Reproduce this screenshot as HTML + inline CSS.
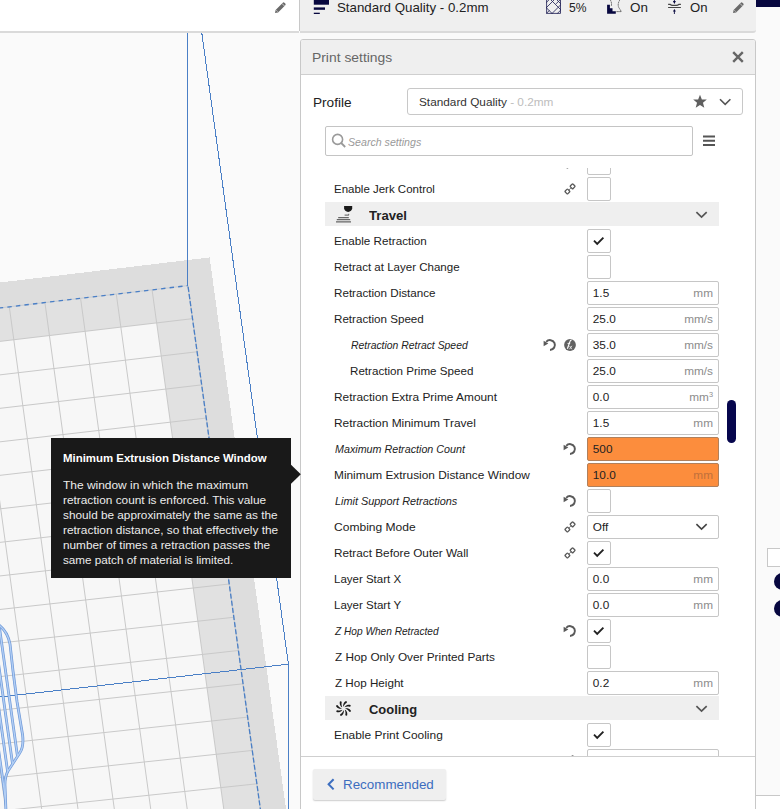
<!DOCTYPE html>
<html><head><meta charset="utf-8"><style>
*{margin:0;padding:0;box-sizing:border-box}
html,body{width:780px;height:809px;overflow:hidden;background:#fafafa;font-family:"Liberation Sans",sans-serif}
.t{position:absolute;white-space:nowrap;line-height:1}
.t sup{font-size:0.62em;vertical-align:0;position:relative;top:-0.5em}
.ic{position:absolute;overflow:visible}
.abs{position:absolute}
.cb{position:absolute;width:24px;height:24px;border:1px solid #c6c6c6;border-radius:2px;background:#fff}
.inp{position:absolute;left:587px;width:132px;height:24px;border:1px solid #c6c6c6;border-radius:2px;background:#fff}
.inp.err{background:#fc8d3d;border-color:#b0805c}
.cat{position:absolute;left:325px;width:394px;height:24px;background:#efefef}
</style></head><body>
<svg class="abs" style="left:0;top:0" width="300" height="809" viewBox="0 0 300 809">
<polygon shape-rendering="crispEdges" points="-171.08,302.95 209.60,257.46 296.05,881.35 -87.54,921.04" fill="#dddddd"/>
<polygon shape-rendering="crispEdges" points="-167.71,327.85 187.94,285.59 270.73,883.97 -87.54,921.04" fill="#e1e1e1"/>
<polygon shape-rendering="crispEdges" points="-163.28,360.65 156.65,322.90 234.61,887.71 -87.54,921.04" fill="#f7f7f7"/>
<path d="M-167.71 327.85L-87.54 921.04M-132.43 323.66L-52.01 917.36M-97.09 319.46L-16.41 913.68M-61.69 315.26L19.25 909.99M-26.22 311.04L54.98 906.29M9.31 306.82L90.78 902.59M44.91 302.59L126.64 898.88M80.57 298.35L162.56 895.16M116.30 294.11L198.55 891.44M152.09 289.85L234.61 887.71M187.94 285.59L270.73 883.97M-163.28 360.65L192.52 318.67M-158.84 393.46L197.10 351.77M-154.41 426.29L201.68 384.88M-149.97 459.14L206.26 418.02M-145.53 492.01L210.85 451.17M-141.08 524.89L215.44 484.35M-136.63 557.80L220.03 517.54M-132.19 590.73L224.63 550.76M-127.73 623.67L229.23 583.99M-123.28 656.63L233.83 617.24M-118.82 689.62L238.43 650.51M-114.36 722.62L243.04 683.81M-109.90 755.64L247.64 717.12M-105.43 788.68L252.26 750.45M-100.96 821.74L256.87 783.80M-96.49 854.82L261.49 817.17M-92.02 887.92L266.11 850.56" stroke="#c9c9c9" stroke-width="1" fill="none"/>
<polyline points="-167.71,327.85 187.94,285.59 270.73,883.97" stroke="#c6ccd4" stroke-width="1" fill="none"/>
<polyline points="-167.71,327.85 187.94,285.59" stroke="#4a7fc6" stroke-width="1.3" fill="none" stroke-dasharray="4.4 4.2" stroke-dashoffset="4.3"/>
<polyline points="187.94,285.59 270.73,883.97" stroke="#4a7fc6" stroke-width="1.3" fill="none" stroke-dasharray="5.1 2.1" stroke-dashoffset="5.9"/>
<path d="M187.4 30L187.4 285.6M201.4 30L288.4 664.2L0 697M288.4 664.2L288.4 812" stroke="#4a7fc6" stroke-width="1" fill="none" shape-rendering="crispEdges"/>
<clipPath id="mc"><path d="M-1 625C4 629 8.5 636 10 644L13 671L17 701.5L22.6 735Q24 747 19.7 753L8 771Q4.6 777 5 786L6 812L-2 812Z"/></clipPath>
<path clip-path="url(#mc)" d="M-1.6 620L26.4 820M-7.6 620L20.4 820M-13.6 620L14.4 820M-19.6 620L8.4 820" stroke="#6d98d8" stroke-width="2.8" fill="none"/>
<path d="M-1 625C4 629 8.5 636 10 644L13 671L17 701.5L22.6 735Q24 747 19.7 753L8 771Q4.6 777 5 786L6 812" stroke="#6d98d8" stroke-width="2.8" fill="none"/>
<path clip-path="url(#mc)" d="M-1.6 620L26.4 820M-7.6 620L20.4 820M-13.6 620L14.4 820M-19.6 620L8.4 820" stroke="#b3cff5" stroke-width="1.4" fill="none"/>
<path d="M-1 625C4 629 8.5 636 10 644L13 671L17 701.5L22.6 735Q24 747 19.7 753L8 771Q4.6 777 5 786L6 812" stroke="#b3cff5" stroke-width="1.4" fill="none"/>
</svg>
<!-- top bar -->
<div class="abs" style="left:0;top:0;width:299px;height:33px;background:#fff;border-bottom:2px solid #dadada"></div>
<div class="abs" style="left:299px;top:0;width:1px;height:31px;background:#c8c8c8"></div>
<div class="abs" style="left:300px;top:0;width:456px;height:33px;background:#efefef;border-bottom:2px solid #dadada;border-bottom-right-radius:3px"></div>
<div class="abs" style="left:756px;top:0;width:24px;height:6.5px;background:#07073f"></div>
<svg class="ic" style="left:274px;top:1px" width="13" height="13" viewBox="0 0 13 13"><path d="M1.6 8.9L8.8 1.7Q9.6 0.9 10.4 1.7L11.3 2.6Q12.1 3.4 11.3 4.2L4.1 11.4L1 12Z" fill="#6a6a6a"/><path d="M8 2.5L10.5 5" stroke="#fff" stroke-width="0.7"/><path d="M2.3 9.2L3.8 10.7" stroke="#fff" stroke-width="0.6"/></svg>
<svg class="ic" style="left:313px;top:-1px" width="17" height="16" viewBox="0 0 17 16"><rect x="0.8" y="0" width="15.2" height="5.7" fill="#07073f"/><rect x="0.8" y="8.4" width="11.2" height="2.4" fill="#07073f"/><rect x="0.8" y="13.7" width="6" height="1.3" fill="#07073f"/></svg>
<div class="t" style="left:337.0px;top:0.83px;font-size:13.2px;color:#222;transform:scaleX(1.0089);transform-origin:0 0;">Standard Quality - 0.2mm</div>

<svg class="abs" style="left:0;top:0" width="780" height="20" viewBox="0 0 780 20">
<defs><clipPath id="ic1"><rect x="546.1" y="-3" width="14.8" height="16.8"/></clipPath></defs>
<g fill="none" stroke="#26265a" stroke-width="0.85">
<path d="M546.6 -3V13.4H560.5V-3"/>
<g clip-path="url(#ic1)"><path d="M540 14.0L560 -6.0M545 -6.0L565 14.0M540 1.3999999999999773L556 17.399999999999977M548 17.5L566 -0.5M556 3.8999999999999773L562 -2.1000000000000227M557 0.0L562 5.0M556 14.799999999999955L562 8.799999999999955M545 3.7999999999999545L550 -1.2000000000000455M545 14.799999999999955L549.5 10.299999999999955"/></g>
</g>
<path d="M607.1 4.8H609.9V8.2H612.5V11.3H615.8V13.8H607.1Z" fill="#07073f"/>
<path d="M610.3 0Q612.2 3 611.2 6.4M619.8 0Q617.4 3.6 618.6 7.2L621.4 11.6H615.8" fill="none" stroke="#555" stroke-width="0.9" stroke-dasharray="1.6 0.6"/>
<path d="M668.1 4.4H670.2Q671 5.4 672.5 5.4H676.5Q678 5.4 678.8 4.4H680.9M668.1 7.5H680.9" fill="none" stroke="#444" stroke-width="1.1"/>
<path d="M674.4 -1V2M674.4 11V14" stroke="#0a0a40" stroke-width="0.9"/>
<path d="M672.9 1.1H675.9L674.4 3.9ZM672.9 11.6H675.9L674.4 8.9Z" fill="#0a0a40"/>
</svg>
<div class="t" style="left:569.0px;top:0.83px;font-size:13.2px;color:#222;transform:scaleX(0.9180);transform-origin:0 0;">5%</div>

<div class="t" style="left:630.0px;top:0.83px;font-size:13.2px;color:#222;transform:scaleX(1.0174);transform-origin:0 0;">On</div>

<div class="t" style="left:690.0px;top:0.83px;font-size:13.2px;color:#222;transform:scaleX(0.9947);transform-origin:0 0;">On</div>
<svg class="ic" style="left:732px;top:1px" width="13" height="13" viewBox="0 0 13 13"><path d="M1.6 8.9L8.8 1.7Q9.6 0.9 10.4 1.7L11.3 2.6Q12.1 3.4 11.3 4.2L4.1 11.4L1 12Z" fill="#6a6a6a"/><path d="M8 2.5L10.5 5" stroke="#efefef" stroke-width="0.7"/><path d="M2.3 9.2L3.8 10.7" stroke="#efefef" stroke-width="0.6"/></svg>

<!-- panel -->
<div class="abs" style="left:300px;top:39px;width:456px;height:790px;background:#fff;border:1px solid #c8c8c8;border-radius:3px"></div>
<div class="abs" style="left:301px;top:40px;width:454px;height:35px;background:#efefef;border-bottom:1px solid #cfcfcf;border-radius:2px 2px 0 0"></div>
<div class="t" style="left:312.0px;top:50.97px;font-size:13.5px;color:#666;transform:scaleX(1.0276);transform-origin:0 0;">Print settings</div>
<svg class="ic" style="left:732px;top:51px" width="12" height="12" viewBox="0 0 12 12"><path d="M1.2 1.2L10.8 10.8M10.8 1.2L1.2 10.8" stroke="#666" stroke-width="2.4"/></svg>
<div class="t" style="left:312.8px;top:95.94px;font-size:13.3px;color:#222;transform:scaleX(1.0238);transform-origin:0 0;">Profile</div>
<div class="abs" style="left:407px;top:88px;width:336px;height:27px;border:1px solid #c8c8c8;border-radius:3px;background:#fff"></div>
<div class="t" style="left:419px;top:97.01px;font-size:11.8px;color:#333;">Standard Quality<span style="color:#bdbdbd"> - 0.2mm</span></div>
<svg class="ic" style="left:693px;top:95px" width="14" height="13" viewBox="0 0 14 13"><path transform="translate(7 6.6) scale(1.1) translate(-7 -6.6)" d="M7 0.4L8.7 4.6L13.2 4.8L9.7 7.7L10.9 12.2L7 9.7L3.1 12.2L4.3 7.7L0.8 4.8L5.3 4.6Z" fill="#5f5f5f"/></svg>
<svg class="ic" style="left:719px;top:98px" width="13" height="8" viewBox="0 0 13 8"><path d="M1 1.2L6.2 6.3L11.4 1.2" fill="none" stroke="#555" stroke-width="1.6"/></svg>
<div class="abs" style="left:325px;top:126px;width:368px;height:30px;border:1px solid #c4c4c4;border-radius:2px;background:#fff"></div>
<svg class="ic" style="left:331px;top:133px" width="16" height="16" viewBox="0 0 16 16"><circle cx="6.6" cy="6.4" r="5" fill="none" stroke="#9a9a9a" stroke-width="1.6"/><path d="M10.2 10L14.2 14" stroke="#9a9a9a" stroke-width="1.8"/></svg>
<div class="t" style="left:348.0px;top:137.23px;font-size:10.6px;color:#9a9a9a;font-style:italic;transform:scaleX(1.0023);transform-origin:0 0;">Search settings</div>
<svg class="ic" style="left:703px;top:135px" width="13" height="12" viewBox="0 0 13 12"><path d="M0 1.5H12M0 5.7H12M0 10H12" stroke="#555" stroke-width="1.9"/></svg>

<!-- settings list -->
<div class="abs" style="left:301px;top:168px;width:454px;height:588px;overflow:hidden">
<div class="abs" style="left:-301px;top:-168px;width:780px;height:809px">
<div class="cb" style="left:587px;top:151px"></div>
<svg class="ic" style="left:563px;top:156px" width="14" height="14" viewBox="0 0 14 14"><g fill="none" stroke="#5a5a5a" stroke-width="1.35"><rect x="2.5" y="7.6" width="3.8" height="3.8" rx="0.8" transform="rotate(45 4.4 9.5)"/><rect x="7.7" y="2.4" width="3.8" height="3.8" rx="0.8" transform="rotate(45 9.6 4.3)"/><path d="M6.2 7.7L7.8 6.1" stroke-width="1"/></g></svg>
<div class="t" style="left:333.7px;top:183.51px;font-size:11.8px;color:#222;transform:scaleX(0.9739);transform-origin:0 0;">Enable Jerk Control</div>
<svg class="ic" style="left:563px;top:182px" width="14" height="14" viewBox="0 0 14 14"><g fill="none" stroke="#5a5a5a" stroke-width="1.35"><rect x="2.5" y="7.6" width="3.8" height="3.8" rx="0.8" transform="rotate(45 4.4 9.5)"/><rect x="7.7" y="2.4" width="3.8" height="3.8" rx="0.8" transform="rotate(45 9.6 4.3)"/><path d="M6.2 7.7L7.8 6.1" stroke-width="1"/></g></svg>
<div class="cb" style="left:587px;top:177px"></div>
<div class="cat" style="top:202px"></div>
<svg class="ic" style="left:335px;top:205px" width="18" height="18" viewBox="0 0 18 18"><path d="M9.1 1.1H17.2V3.2C17.2 5.2 15.3 6.3 13.15 7C11 6.3 9.1 5.2 9.1 3.2Z" fill="#1b1b1b"/><path d="M9.6 10.2H13.4L13.8 8.8" stroke="#777" stroke-width="1.2" fill="none"/><path d="M3.2 12.6H13.8M1.8 14.6H15.2M1 16.9H16" stroke="#666" stroke-width="1.3" fill="none"/></svg>
<div class="t" style="left:368.5px;top:209.85px;font-size:12.7px;color:#222;font-weight:700;transform:scaleX(1.0358);transform-origin:0 0;">Travel</div>
<svg class="ic" style="left:694.5px;top:211.3px" width="13" height="8" viewBox="0 0 13 8"><path d="M1.4 1.1L6.55 6.1L11.7 1.1" fill="none" stroke="#555" stroke-width="1.7"/></svg>
<div class="t" style="left:333.7px;top:235.51px;font-size:11.8px;color:#222;transform:scaleX(0.9895);transform-origin:0 0;">Enable Retraction</div>
<div class="cb" style="left:587px;top:229px"></div>
<svg class="ic" style="left:592.8px;top:235.8px" width="12" height="10" viewBox="0 0 12 10"><path d="M1 4.6L4.2 7.8L10.4 1.6" fill="none" stroke="#222" stroke-width="1.9"/></svg>
<div class="t" style="left:333.7px;top:261.51px;font-size:11.8px;color:#222;transform:scaleX(0.9772);transform-origin:0 0;">Retract at Layer Change</div>
<div class="cb" style="left:587px;top:255px"></div>
<div class="t" style="left:333.7px;top:287.51px;font-size:11.8px;color:#222;transform:scaleX(0.9869);transform-origin:0 0;">Retraction Distance</div>
<div class="inp" style="top:281px"></div>
<div class="t" style="left:592.8px;top:288.01px;font-size:11.8px;color:#222;">1.5</div>
<div class="t" style="right:67px;top:288.01px;font-size:11.8px;color:#8c8c8c;">mm</div>
<div class="t" style="left:333.7px;top:313.51px;font-size:11.8px;color:#222;transform:scaleX(0.9851);transform-origin:0 0;">Retraction Speed</div>
<div class="inp" style="top:307px"></div>
<div class="t" style="left:592.8px;top:314.01px;font-size:11.8px;color:#222;">25.0</div>
<div class="t" style="right:67px;top:314.01px;font-size:11.8px;color:#8c8c8c;">mm/s</div>
<div class="t" style="left:351.2px;top:339.51px;font-size:11.8px;color:#222;font-style:italic;transform:scaleX(0.8810);transform-origin:0 0;">Retraction Retract Speed</div>
<svg class="ic" style="left:542.5px;top:337.8px" width="14" height="14" viewBox="0 0 14 14"><path d="M3.25 3.85A4.9 4.9 0 1 1 7 11.90" fill="none" stroke="#5a5a5a" stroke-width="2"/><path d="M0.6 2.8L0.6 8.3L5.3 5.5Z" fill="#5a5a5a"/></svg>
<svg class="ic" style="left:563px;top:337.8px" width="14" height="14" viewBox="0 0 14 14"><circle cx="7" cy="7" r="5.9" fill="#626262"/><path d="M8.6 2.2Q7.4 2.1 7 3.4L4.4 10.8" fill="none" stroke="#fff" stroke-width="1.2"/><path d="M4.5 5.4H7.2" stroke="#fff" stroke-width="0.9"/><path d="M6.6 8L8.8 11.2M8.9 7.8L6.5 11.2" stroke="#e8e8e8" stroke-width="0.9"/></svg>
<div class="inp" style="top:333px"></div>
<div class="t" style="left:592.8px;top:340.01px;font-size:11.8px;color:#222;">35.0</div>
<div class="t" style="right:67px;top:340.01px;font-size:11.8px;color:#8c8c8c;">mm/s</div>
<div class="t" style="left:350.2px;top:365.51px;font-size:11.8px;color:#222;transform:scaleX(0.9852);transform-origin:0 0;">Retraction Prime Speed</div>
<div class="inp" style="top:359px"></div>
<div class="t" style="left:592.8px;top:366.01px;font-size:11.8px;color:#222;">25.0</div>
<div class="t" style="right:67px;top:366.01px;font-size:11.8px;color:#8c8c8c;">mm/s</div>
<div class="t" style="left:333.7px;top:391.51px;font-size:11.8px;color:#222;transform:scaleX(1.0065);transform-origin:0 0;">Retraction Extra Prime Amount</div>
<div class="inp" style="top:385px"></div>
<div class="t" style="left:592.8px;top:392.01px;font-size:11.8px;color:#222;">0.0</div>
<div class="t" style="right:67px;top:392.01px;font-size:11.8px;color:#8c8c8c;">mm<sup>3</sup></div>
<div class="t" style="left:333.7px;top:417.51px;font-size:11.8px;color:#222;transform:scaleX(1.0107);transform-origin:0 0;">Retraction Minimum Travel</div>
<div class="inp" style="top:411px"></div>
<div class="t" style="left:592.8px;top:418.01px;font-size:11.8px;color:#222;">1.5</div>
<div class="t" style="right:67px;top:418.01px;font-size:11.8px;color:#8c8c8c;">mm</div>
<div class="t" style="left:334.7px;top:443.51px;font-size:11.8px;color:#222;font-style:italic;transform:scaleX(0.9088);transform-origin:0 0;">Maximum Retraction Count</div>
<svg class="ic" style="left:563.3px;top:441.7px" width="14" height="14" viewBox="0 0 14 14"><path d="M3.25 3.85A4.9 4.9 0 1 1 7 11.90" fill="none" stroke="#5a5a5a" stroke-width="2"/><path d="M0.6 2.8L0.6 8.3L5.3 5.5Z" fill="#5a5a5a"/></svg>
<div class="inp err" style="top:437px"></div>
<div class="t" style="left:592.8px;top:444.01px;font-size:11.8px;color:#222;">500</div>
<div class="t" style="left:333.7px;top:469.51px;font-size:11.8px;color:#222;transform:scaleX(1.0061);transform-origin:0 0;">Minimum Extrusion Distance Window</div>
<div class="inp err" style="top:463px"></div>
<div class="t" style="left:592.8px;top:470.01px;font-size:11.8px;color:#222;">10.0</div>
<div class="t" style="right:67px;top:470.01px;font-size:11.8px;color:#c0703c;">mm</div>
<div class="t" style="left:334.7px;top:495.51px;font-size:11.8px;color:#222;font-style:italic;transform:scaleX(0.9226);transform-origin:0 0;">Limit Support Retractions</div>
<svg class="ic" style="left:563.3px;top:493.7px" width="14" height="14" viewBox="0 0 14 14"><path d="M3.25 3.85A4.9 4.9 0 1 1 7 11.90" fill="none" stroke="#5a5a5a" stroke-width="2"/><path d="M0.6 2.8L0.6 8.3L5.3 5.5Z" fill="#5a5a5a"/></svg>
<div class="cb" style="left:587px;top:489px"></div>
<div class="t" style="left:333.7px;top:521.51px;font-size:11.8px;color:#222;transform:scaleX(1.0213);transform-origin:0 0;">Combing Mode</div>
<svg class="ic" style="left:563px;top:520px" width="14" height="14" viewBox="0 0 14 14"><g fill="none" stroke="#5a5a5a" stroke-width="1.35"><rect x="2.5" y="7.6" width="3.8" height="3.8" rx="0.8" transform="rotate(45 4.4 9.5)"/><rect x="7.7" y="2.4" width="3.8" height="3.8" rx="0.8" transform="rotate(45 9.6 4.3)"/><path d="M6.2 7.7L7.8 6.1" stroke-width="1"/></g></svg>
<div class="inp" style="top:515px"></div>
<div class="t" style="left:592.8px;top:522.01px;font-size:11.8px;color:#222;">Off</div>
<svg class="ic" style="left:694.5px;top:523.3px" width="13" height="8" viewBox="0 0 13 8"><path d="M1.4 1.1L6.55 6.1L11.7 1.1" fill="none" stroke="#444" stroke-width="1.6"/></svg>
<div class="t" style="left:333.7px;top:547.51px;font-size:11.8px;color:#222;transform:scaleX(0.9983);transform-origin:0 0;">Retract Before Outer Wall</div>
<svg class="ic" style="left:563px;top:546px" width="14" height="14" viewBox="0 0 14 14"><g fill="none" stroke="#5a5a5a" stroke-width="1.35"><rect x="2.5" y="7.6" width="3.8" height="3.8" rx="0.8" transform="rotate(45 4.4 9.5)"/><rect x="7.7" y="2.4" width="3.8" height="3.8" rx="0.8" transform="rotate(45 9.6 4.3)"/><path d="M6.2 7.7L7.8 6.1" stroke-width="1"/></g></svg>
<div class="cb" style="left:587px;top:541px"></div>
<svg class="ic" style="left:592.8px;top:547.8px" width="12" height="10" viewBox="0 0 12 10"><path d="M1 4.6L4.2 7.8L10.4 1.6" fill="none" stroke="#222" stroke-width="1.9"/></svg>
<div class="t" style="left:333.7px;top:573.51px;font-size:11.8px;color:#222;transform:scaleX(0.9744);transform-origin:0 0;">Layer Start X</div>
<div class="inp" style="top:567px"></div>
<div class="t" style="left:592.8px;top:574.01px;font-size:11.8px;color:#222;">0.0</div>
<div class="t" style="right:67px;top:574.01px;font-size:11.8px;color:#8c8c8c;">mm</div>
<div class="t" style="left:333.7px;top:599.51px;font-size:11.8px;color:#222;transform:scaleX(0.9776);transform-origin:0 0;">Layer Start Y</div>
<div class="inp" style="top:593px"></div>
<div class="t" style="left:592.8px;top:600.01px;font-size:11.8px;color:#222;">0.0</div>
<div class="t" style="right:67px;top:600.01px;font-size:11.8px;color:#8c8c8c;">mm</div>
<div class="t" style="left:334.7px;top:625.51px;font-size:11.8px;color:#222;font-style:italic;transform:scaleX(0.8586);transform-origin:0 0;">Z Hop When Retracted</div>
<svg class="ic" style="left:563.3px;top:623.7px" width="14" height="14" viewBox="0 0 14 14"><path d="M3.25 3.85A4.9 4.9 0 1 1 7 11.90" fill="none" stroke="#5a5a5a" stroke-width="2"/><path d="M0.6 2.8L0.6 8.3L5.3 5.5Z" fill="#5a5a5a"/></svg>
<div class="cb" style="left:587px;top:619px"></div>
<svg class="ic" style="left:592.8px;top:625.8px" width="12" height="10" viewBox="0 0 12 10"><path d="M1 4.6L4.2 7.8L10.4 1.6" fill="none" stroke="#222" stroke-width="1.9"/></svg>
<div class="t" style="left:334.7px;top:651.51px;font-size:11.8px;color:#222;transform:scaleX(0.9996);transform-origin:0 0;">Z Hop Only Over Printed Parts</div>
<div class="cb" style="left:587px;top:645px"></div>
<div class="t" style="left:334.7px;top:677.51px;font-size:11.8px;color:#222;transform:scaleX(0.9868);transform-origin:0 0;">Z Hop Height</div>
<div class="inp" style="top:671px"></div>
<div class="t" style="left:592.8px;top:678.01px;font-size:11.8px;color:#222;">0.2</div>
<div class="t" style="right:67px;top:678.01px;font-size:11.8px;color:#8c8c8c;">mm</div>
<div class="cat" style="top:696px"></div>
<svg class="ic" style="left:335px;top:699.9px" width="17" height="17" viewBox="0 0 17 17"><path d="M8.63 6.61L8.78 6.16L8.97 5.73L9.18 5.32L9.43 4.92L9.70 4.55L10.00 4.20L10.31 3.87L10.65 3.55L11.02 3.25L11.41 2.96L11.83 2.68L11.88 1.58L11.88 1.58L10.86 1.05L10.30 1.43L9.81 1.85L9.37 2.32L9.00 2.82L8.70 3.35L8.47 3.89L8.30 4.44L8.20 5.00L8.16 5.54L8.17 6.07L8.23 6.60ZM9.93 7.26L10.35 7.04L10.79 6.87L11.24 6.73L11.69 6.63L12.14 6.56L12.60 6.52L13.06 6.51L13.52 6.52L14.00 6.57L14.48 6.64L14.97 6.74L15.78 5.99L15.78 5.99L15.43 4.90L14.78 4.77L14.12 4.72L13.49 4.75L12.87 4.84L12.29 5.00L11.74 5.22L11.23 5.49L10.77 5.81L10.35 6.17L9.98 6.55L9.66 6.96ZM10.39 8.63L10.84 8.78L11.27 8.97L11.68 9.18L12.08 9.43L12.45 9.70L12.80 10.00L13.13 10.31L13.45 10.65L13.75 11.02L14.04 11.41L14.32 11.83L15.42 11.88L15.42 11.88L15.95 10.86L15.57 10.30L15.15 9.81L14.68 9.37L14.18 9.00L13.65 8.70L13.11 8.47L12.56 8.30L12.00 8.20L11.46 8.16L10.93 8.17L10.40 8.23ZM9.74 9.93L9.96 10.35L10.13 10.79L10.27 11.24L10.37 11.69L10.44 12.14L10.48 12.60L10.49 13.06L10.48 13.52L10.43 14.00L10.36 14.48L10.26 14.97L11.01 15.78L11.01 15.78L12.10 15.43L12.23 14.78L12.28 14.12L12.25 13.49L12.16 12.87L12.00 12.29L11.78 11.74L11.51 11.23L11.19 10.77L10.83 10.35L10.45 9.98L10.04 9.66ZM8.37 10.39L8.22 10.84L8.03 11.27L7.82 11.68L7.57 12.08L7.30 12.45L7.00 12.80L6.69 13.13L6.35 13.45L5.98 13.75L5.59 14.04L5.17 14.32L5.12 15.42L5.12 15.42L6.14 15.95L6.70 15.57L7.19 15.15L7.63 14.68L8.00 14.18L8.30 13.65L8.53 13.11L8.70 12.56L8.80 12.00L8.84 11.46L8.83 10.93L8.77 10.40ZM7.07 9.74L6.65 9.96L6.21 10.13L5.76 10.27L5.31 10.37L4.86 10.44L4.40 10.48L3.94 10.49L3.48 10.48L3.00 10.43L2.52 10.36L2.03 10.26L1.22 11.01L1.22 11.01L1.57 12.10L2.22 12.23L2.88 12.28L3.51 12.25L4.13 12.16L4.71 12.00L5.26 11.78L5.77 11.51L6.23 11.19L6.65 10.83L7.02 10.45L7.34 10.04ZM6.61 8.37L6.16 8.22L5.73 8.03L5.32 7.82L4.92 7.57L4.55 7.30L4.20 7.00L3.87 6.69L3.55 6.35L3.25 5.98L2.96 5.59L2.68 5.17L1.58 5.12L1.58 5.12L1.05 6.14L1.43 6.70L1.85 7.19L2.32 7.63L2.82 8.00L3.35 8.30L3.89 8.53L4.44 8.70L5.00 8.80L5.54 8.84L6.07 8.83L6.60 8.77ZM7.26 7.07L7.04 6.65L6.87 6.21L6.73 5.76L6.63 5.31L6.56 4.86L6.52 4.40L6.51 3.94L6.52 3.48L6.57 3.00L6.64 2.52L6.74 2.03L5.99 1.22L5.99 1.22L4.90 1.57L4.77 2.22L4.72 2.88L4.75 3.51L4.84 4.13L5.00 4.71L5.22 5.26L5.49 5.77L5.81 6.23L6.17 6.65L6.55 7.02L6.96 7.34Z" fill="#1c1c1c"/></svg>
<div class="t" style="left:368.5px;top:703.85px;font-size:12.7px;color:#222;font-weight:700;transform:scaleX(1.0208);transform-origin:0 0;">Cooling</div>
<svg class="ic" style="left:694.5px;top:705.3px" width="13" height="8" viewBox="0 0 13 8"><path d="M1.4 1.1L6.55 6.1L11.7 1.1" fill="none" stroke="#555" stroke-width="1.7"/></svg>
<div class="t" style="left:333.7px;top:729.51px;font-size:11.8px;color:#222;transform:scaleX(1.0115);transform-origin:0 0;">Enable Print Cooling</div>
<div class="cb" style="left:587px;top:723px"></div>
<svg class="ic" style="left:592.8px;top:729.8px" width="12" height="10" viewBox="0 0 12 10"><path d="M1 4.6L4.2 7.8L10.4 1.6" fill="none" stroke="#222" stroke-width="1.9"/></svg>
<div class="t" style="left:334.5px;top:755.51px;font-size:11.8px;color:#222;">Print Cooling Fan Speed</div>
<svg class="ic" style="left:563px;top:754px" width="14" height="14" viewBox="0 0 14 14"><g fill="none" stroke="#5a5a5a" stroke-width="1.35"><rect x="2.5" y="7.6" width="3.8" height="3.8" rx="0.8" transform="rotate(45 4.4 9.5)"/><rect x="7.7" y="2.4" width="3.8" height="3.8" rx="0.8" transform="rotate(45 9.6 4.3)"/><path d="M6.2 7.7L7.8 6.1" stroke-width="1"/></g></svg>
<div class="inp" style="top:749px"></div>
<div class="t" style="left:592.8px;top:756.01px;font-size:11.8px;color:#222;">100.0</div>
<div class="t" style="right:67px;top:756.01px;font-size:11.8px;color:#8c8c8c;">%</div>
</div></div>
<div class="abs" style="left:727px;top:400px;width:9px;height:42.5px;border-radius:4.5px;background:#06064d"></div>

<!-- footer -->
<div class="abs" style="left:301px;top:756px;width:454px;height:1px;background:#cfcfcf"></div>
<div class="abs" style="left:313px;top:769px;width:133px;height:30.5px;background:#efefef;border-radius:2px;box-shadow:0 1px 1.5px rgba(0,0,0,0.2)"></div>
<svg class="ic" style="left:326px;top:778px" width="10" height="13" viewBox="0 0 10 13"><path d="M7.6 1.2L2.6 6.3L7.6 11.4" fill="none" stroke="#3d6fc0" stroke-width="2"/></svg>
<div class="t" style="left:343.0px;top:778.29px;font-size:13.24px;color:#3c6dbf;transform:scaleX(1.0117);transform-origin:0 0;">Recommended</div>

<!-- right edge -->
<div class="abs" style="left:767px;top:548px;width:20px;height:19px;background:#fff;border:1px solid #c8c8c8"></div>
<div class="abs" style="left:774px;top:572.5px;width:17.5px;height:17.5px;border-radius:50%;background:#07073f"></div>
<div class="abs" style="left:774px;top:599.8px;width:17.5px;height:17.5px;border-radius:50%;background:#07073f"></div>
<div class="abs" style="left:756px;top:795px;width:24px;height:1px;background:#c8c8c8"></div>
<div class="abs" style="left:756px;top:796px;width:24px;height:13px;background:#fff"></div>

<!-- tooltip -->
<div class="abs" style="left:51px;top:438px;width:240px;height:140px;background:#191919"></div>
<svg class="ic" style="left:290px;top:464px" width="12" height="21" viewBox="0 0 12 21"><path d="M0 -0.2L10.8 10.3L0 20.8Z" fill="#191919"/></svg>
<div class="t" style="left:63.2px;top:452.61px;font-size:11.45px;color:#fff;font-weight:700;transform:scaleX(0.9986);transform-origin:0 0;">Minimum Extrusion Distance Window</div>
<div class="t" style="left:63.2px;top:480.21px;font-size:11.8px;color:#ececec;transform:scaleX(1.0119);transform-origin:0 0;">The window in which the maximum</div>
<div class="t" style="left:63.2px;top:495.11px;font-size:11.8px;color:#ececec;transform:scaleX(1.0034);transform-origin:0 0;">retraction count is enforced. This value</div>
<div class="t" style="left:63.2px;top:510.21px;font-size:11.8px;color:#ececec;transform:scaleX(0.9977);transform-origin:0 0;">should be approximately the same as the</div>
<div class="t" style="left:63.2px;top:524.91px;font-size:11.8px;color:#ececec;transform:scaleX(1.0077);transform-origin:0 0;">retraction distance, so that effectively the</div>
<div class="t" style="left:63.2px;top:540.11px;font-size:11.8px;color:#ececec;transform:scaleX(0.9995);transform-origin:0 0;">number of times a retraction passes the</div>
<div class="t" style="left:63.2px;top:555.21px;font-size:11.8px;color:#ececec;transform:scaleX(0.9908);transform-origin:0 0;">same patch of material is limited.</div>
</body></html>
